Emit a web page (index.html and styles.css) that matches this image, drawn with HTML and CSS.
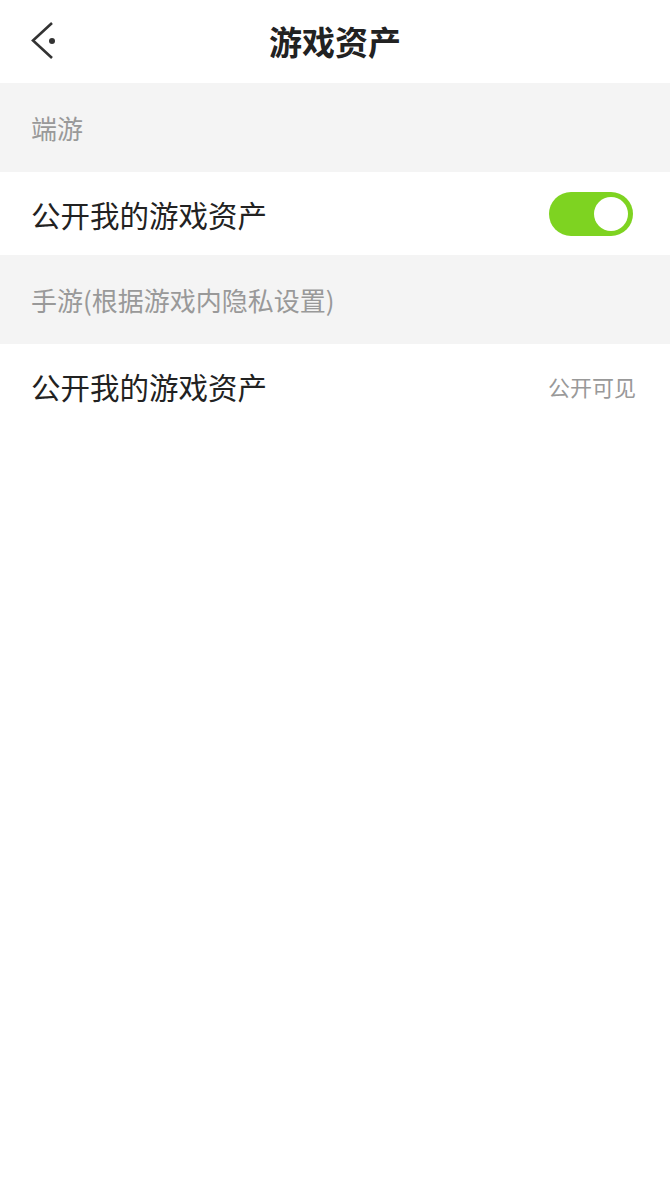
FILE: index.html
```html
<!DOCTYPE html>
<html lang="zh-CN">
<head>
    <meta charset="UTF-8">
    <meta name="viewport" content="width=device-width, initial-scale=1.0">
    <title>游戏资产</title>
    <link rel="stylesheet" href="styles.css">
</head>
<body>
    <div class="page">
        <header class="topbar">
            <a class="back" href="#">
                <svg width="30" height="44" viewBox="0 0 30 44">
                    <polyline points="22,4 3,21.5 22,39" fill="none" stroke="#333" stroke-width="2.6"/>
                    <circle cx="22" cy="22" r="3" fill="#333"/>
                </svg>
            </a>
            <h1>游戏资产</h1>
        </header>

        <div class="section-title">端游</div>
        <div class="row">
            <span class="row-label">公开我的游戏资产</span>
            <span class="switch on"><span class="knob"></span></span>
        </div>

        <div class="section-title">手游(根据游戏内隐私设置)</div>
        <div class="row">
            <span class="row-label">公开我的游戏资产</span>
            <span class="row-value">公开可见</span>
        </div>
    </div>
</body>
</html>
```

FILE: styles.css
```css
body {
    margin: 0;
    background-color: #fff;
    font-family: "Noto Sans CJK SC", "Noto Sans", sans-serif;
    color: #222;
}
.page {
    width: 670px;
    min-height: 1185px;
    background-color: #fff;
}
.topbar {
    height: 83px;
    display: flex;
    align-items: center;
    justify-content: center;
    position: relative;
}
.back {
    position: absolute;
    left: 30px;
    top: 19px;
    display: block;
    height: 44px;
}
.topbar h1 {
    margin: 0;
    font-size: 33px;
    font-weight: bold;
    color: #222;
    line-height: 1;
}
.section-title {
    height: 89px;
    background-color: #f4f4f4;
    padding: 0 31px;
    display: flex;
    align-items: center;
    font-size: 26px;
    color: #999;
}
.row {
    height: 83px;
    padding: 0 37px 0 31px;
    display: flex;
    align-items: center;
    justify-content: space-between;
}
.row-label {
    font-size: 29.5px;
    color: #222;
}
.row-value {
    font-size: 22px;
    color: #999;
    margin-right: -3px;
}
.switch {
    width: 84px;
    height: 44px;
    border-radius: 22px;
    background-color: #ddd;
    display: flex;
    align-items: center;
    padding: 0 5px;
    box-sizing: border-box;
}
.switch.on {
    background-color: #7ed321;
    justify-content: flex-end;
}
.knob {
    width: 34px;
    height: 34px;
    border-radius: 50%;
    background-color: #fff;
}
```
